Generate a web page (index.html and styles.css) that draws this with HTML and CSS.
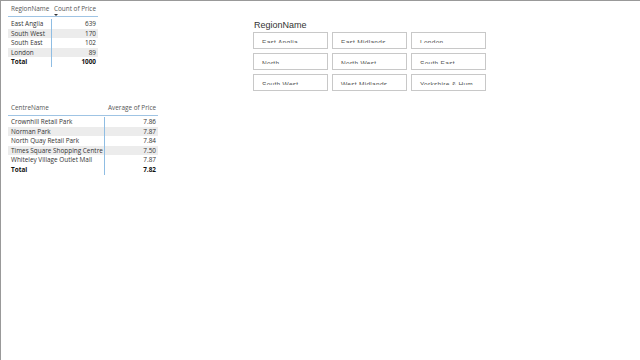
FILE: index.html
```html
<!DOCTYPE html>
<html lang="en">
  <head>
    <meta charset="UTF-8" />
    <title>Report</title>
    <link rel="stylesheet" href="styles.css">
  </head>
  <body>
    <div class="canvas">
      <div class="left">
        <div class="matrix region-table">
          <div class="hrow">
            <div class="cell c1">RegionName</div>
            <div class="cell c2 sorted">Count of Price<span class="sort"></span></div>
          </div>
          <div class="rows">
            <div class="row"><div class="cell c1">East Anglia</div><div class="cell c2">639</div></div>
            <div class="row alt"><div class="cell c1">South West</div><div class="cell c2">170</div></div>
            <div class="row"><div class="cell c1">South East</div><div class="cell c2">102</div></div>
            <div class="row alt"><div class="cell c1">London</div><div class="cell c2">89</div></div>
            <div class="row total"><div class="cell c1">Total</div><div class="cell c2">1000</div></div>
          </div>
        </div>

        <div class="matrix centre-table">
          <div class="hrow">
            <div class="cell c1">CentreName</div>
            <div class="cell c2">Average of Price</div>
          </div>
          <div class="rows">
            <div class="row"><div class="cell c1">Crownhill Retail Park</div><div class="cell c2">7.86</div></div>
            <div class="row alt"><div class="cell c1">Norman Park</div><div class="cell c2">7.87</div></div>
            <div class="row"><div class="cell c1">North Quay Retail Park</div><div class="cell c2">7.84</div></div>
            <div class="row alt"><div class="cell c1">Times Square Shopping Centre</div><div class="cell c2">7.50</div></div>
            <div class="row"><div class="cell c1">Whiteley Village Outlet Mall</div><div class="cell c2">7.87</div></div>
            <div class="row total"><div class="cell c1">Total</div><div class="cell c2">7.82</div></div>
          </div>
        </div>
      </div>

      <div class="slicer">
        <div class="slicer-title">RegionName</div>
        <div class="tiles">
          <div class="tile"><span>East Anglia</span></div>
          <div class="tile"><span>East Midlands</span></div>
          <div class="tile"><span>London</span></div>
          <div class="tile"><span>North</span></div>
          <div class="tile"><span>North West</span></div>
          <div class="tile"><span>South East</span></div>
          <div class="tile"><span>South West</span></div>
          <div class="tile"><span>West Midlands</span></div>
          <div class="tile"><span>Yorkshire &amp; Hum</span></div>
        </div>
      </div>
    </div>
  </body>
</html>
```

FILE: styles.css
```css
html, body {
  margin: 0;
  padding: 0;
  height: 100%;
}

body {
  font-family: "Open Sans", "Noto Sans", sans-serif;
  background-color: #ffffff;
  color: #333333;
  border-top: 1px solid #999999;
  border-left: 1px solid #999999;
  box-sizing: border-box;
}

.canvas {
  display: flex;
}

.left {
  width: 252px;
  padding-left: 7px;
  box-sizing: border-box;
}

/* tables */
.matrix {
  font-size: 6.4px;
}

.region-table {
  width: 90px;
  margin-top: 3px;
}

.centre-table {
  width: 150px;
  margin-top: 36px;
}

.hrow {
  display: flex;
  height: 12px;
  line-height: 10px;
  color: #555555;
  border-bottom: 1px solid #9fc4e4;
}

.rows {
  padding-top: 2px;
}

.centre-table .rows {
  padding-top: 1px;
}

.row {
  display: flex;
  height: 9.6px;
  line-height: 9.6px;
}

.row.alt {
  background-color: #ececec;
}

.row.total {
  font-weight: bold;
  color: #111111;
}

.cell {
  padding: 0 2px 0 3px;
  white-space: nowrap;
  overflow: hidden;
}

.c2 {
  text-align: right;
  flex: 1;
}

.region-table .c1 {
  width: 44px;
  box-sizing: border-box;
}

.centre-table .c1 {
  width: 97px;
  box-sizing: border-box;
}

.rows .c1 {
  border-right: 1px solid #8fbde3;
}

.sorted {
  position: relative;
  overflow: visible;
}

.sort {
  position: absolute;
  left: 3px;
  top: 10px;
  width: 0;
  height: 0;
  border-left: 2px solid transparent;
  border-right: 2px solid transparent;
  border-top: 2px solid #333333;
}

/* slicer */
.slicer {
  padding-top: 18px;
}

.slicer-title {
  font-family: "Liberation Sans", Arial, sans-serif;
  font-size: 9px;
  color: #333333;
  height: 13px;
  line-height: 12px;
  padding-left: 1px;
}

.tiles {
  display: grid;
  grid-template-columns: repeat(3, 75px);
  grid-auto-rows: 17px;
  column-gap: 4px;
  row-gap: 4px;
}

.tile {
  border: 1px solid #c8c8c8;
  box-sizing: border-box;
}

.tile span {
  display: block;
  height: 10px;
  overflow: hidden;
  padding: 6px 0 0 8px;
  box-sizing: border-box;
  font-family: "Liberation Sans", Arial, sans-serif;
  font-size: 6.5px;
  line-height: 8px;
  color: #555555;
  letter-spacing: 0.3px;
}
```
